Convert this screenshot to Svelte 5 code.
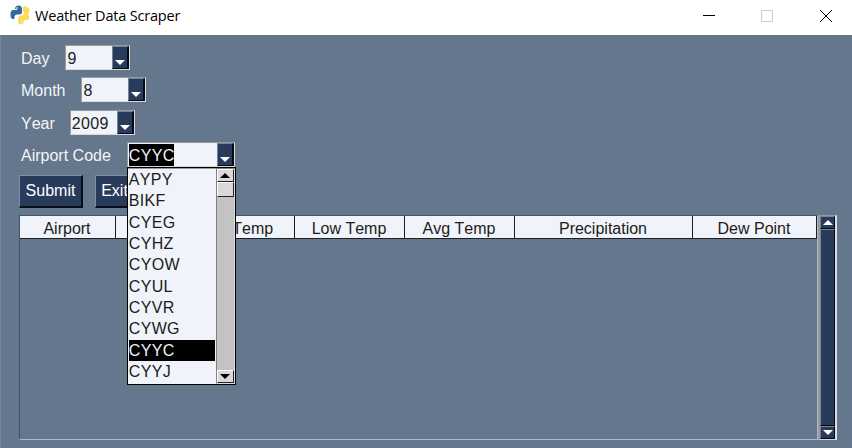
<script>
  const fields = [
    { label: 'Day', value: '9', width: 65, gap: 16 },
    { label: 'Month', value: '8', width: 65, gap: 16 },
    { label: 'Year', value: '2009', width: 65, gap: 15 },
    { label: 'Airport Code', value: 'CYYC', width: 108, gap: 16, selected: true }
  ];
  const codes = ['AYPY', 'BIKF', 'CYEG', 'CYHZ', 'CYOW', 'CYUL', 'CYVR', 'CYWG', 'CYYC', 'CYYJ'];
  const columns = [
    { name: 'Airport', width: 96 },
    { name: 'Date', width: 59 },
    { name: 'High Temp', width: 120 },
    { name: 'Low Temp', width: 110 },
    { name: 'Avg Temp', width: 110 },
    { name: 'Precipitation', width: 178 },
    { name: 'Dew Point', width: 124 }
  ];
</script>

{#snippet arrow(up, color)}
  <svg width="10" height="5" viewBox="0 0 10 5"><path d={up ? 'M5 0 10 5H0Z' : 'M0 0H10L5 5Z'} fill={color} /></svg>
{/snippet}

<div class="window">
  <header>
    <svg class="logo" width="20" height="20" viewBox="0 0 20 20">
      <path d="M5 4Q5 .5 8.500 .5T12 4v3Q12 9.500 9 9.500H7Q4.500 9.500 4.500 12v2H3Q.5 14 .5 9.500T3 5H7V4Z" fill="#31699b" />
      <path d="M13.500 1.500Q16.500 .5 18.500 3T19 7.500Q18 9 19 11.500T17 15h-3Q14 19.500 11 19.500T8 16v-2Q8 11 11 10.500h1Q14.500 10 13.500 7T13.500 1.500Z" fill="#ffd95c" />
      <circle cx="7" cy="3" r=".8" fill="#fff" />
      <circle cx="11.800" cy="17" r=".8" fill="#fff" />
    </svg>
    <span class="title">Weather Data Scraper</span>
    <svg class="controls" width="132" height="20" viewBox="0 0 132 20" fill="none" shape-rendering="crispEdges">
      <path d="M3 7.500h12" stroke="#000" />
      <rect x="61.500" y="2.500" width="11" height="11" stroke="#ccc" />
      <path d="m120 2 12 12m0-12-12 12" stroke="#000" shape-rendering="auto" />
    </svg>
  </header>
  <main>
    {#each fields as f}
      <div class="field">
        <span class="label" style:margin-right="{f.gap}px">{f.label}</span>
        <div class="combo" style:width="{f.width}px">
          <span class="value"><span class:selected={f.selected}>{f.value}</span></span>
          <span class="drop">{@render arrow(false, '#fff')}</span>
          {#if f.selected}
            <div class="menu">
              <div class="options">
                {#each codes as code}
                  <div class="option" class:active={code === f.value}>{code}</div>
                {/each}
              </div>
              <div class="menubar">
                <span class="cap">{@render arrow(true, '#000')}</span>
                <span class="thumb"></span>
                <span class="cap end">{@render arrow(false, '#000')}</span>
              </div>
            </div>
          {/if}
        </div>
      </div>
    {/each}
    <div class="buttons">
      <button>Submit</button>
      <button class="exit">Exit</button>
    </div>
    <div class="results">
      <div class="table">
        <div class="head">
          {#each columns as c}
            <div class="col" style:width="{c.width}px">{c.name}</div>
          {/each}
        </div>
      </div>
      <div class="scroll">
        <span class="tip">{@render arrow(true, '#fff')}</span>
        <span class="track"></span>
        <span class="tip">{@render arrow(false, '#fff')}</span>
      </div>
    </div>
  </main>
</div>

<style>
  .window, .window * { box-sizing: border-box; }
  .window {
    width: 852px; height: 448px; overflow: hidden;
    display: flex; flex-direction: column;
    font: 16px/20px "Liberation Sans", Arial, sans-serif;
    font-kerning: none;
    color: #1c1c20; background: #64778d;
  }
  svg { display: block; flex: none; }
  header { height: 35px; display: flex; align-items: center; background: #fff; padding: 0 20px 5px 10px; flex: none; }
  .title { color: #000; font: 14.5px/20px "Open Sans", sans-serif; margin-left: 5px; padding-top: 2px; letter-spacing: -0.18px; white-space: nowrap; }
  .controls { margin-left: auto; position: relative; top: 3px; }
  main { flex: 1; padding: 10px 15px 0 18px; border-left: 1px solid #71869d; }
  .field { display: flex; height: 32.4px; align-items: flex-start; }
  .label { color: #fff; margin-left: 2px; line-height: 25px; padding-top: 1px; white-space: nowrap; opacity: .93; }
  .combo {
    position: relative; height: 25px; display: flex;
    border: 1px solid #9a9a9a; border-right-color: #d9d9d9; border-bottom-color: #d9d9d9;
    background: #f0f3f9;
  }
  .value { flex: 1; padding: 1px 0 0 1px; line-height: 23px; letter-spacing: .3px; }
  .selected { display: inline-block; height: 22px; background: #000; color: #f0f3f9; }
  .drop {
    width: 17px; display: flex; justify-content: center; align-items: flex-end; padding-bottom: 3px;
    background: #283b5b; border: 1px solid #75849b; border-right: 2px solid #050a14; border-bottom-color: #050a14;
  }
  .menu {
    position: absolute; z-index: 2; left: -1px; top: 24px; width: 109px; height: 218px;
    display: flex; background: #f0f3f9; border: 1px solid #000;
  }
  .options { flex: 1; padding: 0 1px 0 1px; border-top: 1px solid #999; }
  .option { height: 21.3px; line-height: 22px; letter-spacing: .3px; }
  .active { background: #000; color: #f0f3f9; }
  .menubar { width: 19px; display: flex; flex-direction: column; background: #c3c3c3; border: 1px solid #828282; border-right-color: #ddd; border-bottom-color: #ddd; }
  .cap, .thumb {
    height: 13px; flex: none; display: flex; align-items: center; justify-content: center;
    background: #d9d9d9; border: 1px solid #fff; border-right-color: #222; border-bottom-color: #222;
  }
  .thumb { height: 15px; }
  .end { margin-top: auto; }
  .buttons { display: flex; gap: 12px; padding-top: .4px; height: 40px; }
  button {
    width: 64px; height: 33px; padding: 1px 0 0; font: inherit; color: #fff; background: #283b5b;
    border: 1px solid #8290a4; border-right: 2px solid #080d17; border-bottom: 2px solid #080d17;
  }
  .exit { width: 41px; padding-right: 1px; }
  .results { display: flex; height: 225px; }
  .table { width: 799px; border: 1px solid #43536b; border-bottom-color: #a9b8ca; border-right-color: #a9b8ca; }
  .head { display: flex; height: 23px; background: #f0f3f9; border-bottom: 1px solid #202020; width: 797px; }
  .col { flex: none; text-align: center; line-height: 25px; padding-right: 1px; border-right: 1px solid #202020; }
  .scroll {
    width: 19px; display: flex; flex-direction: column; background: #283b5b;
    border: 1px solid #9a9a9a; border-left-width: 2px; border-right: 2px solid #d9e0e5; border-bottom-color: #d9d9d9;
  }
  .tip { height: 13px; display: flex; align-items: center; justify-content: center; border: 1px solid #75849b; border-right-color: #05070c; border-bottom-color: #05070c; }
  .track { flex: 1; border: 1px solid #75849b; border-right-color: #05070c; border-bottom-color: #05070c; }
</style>
